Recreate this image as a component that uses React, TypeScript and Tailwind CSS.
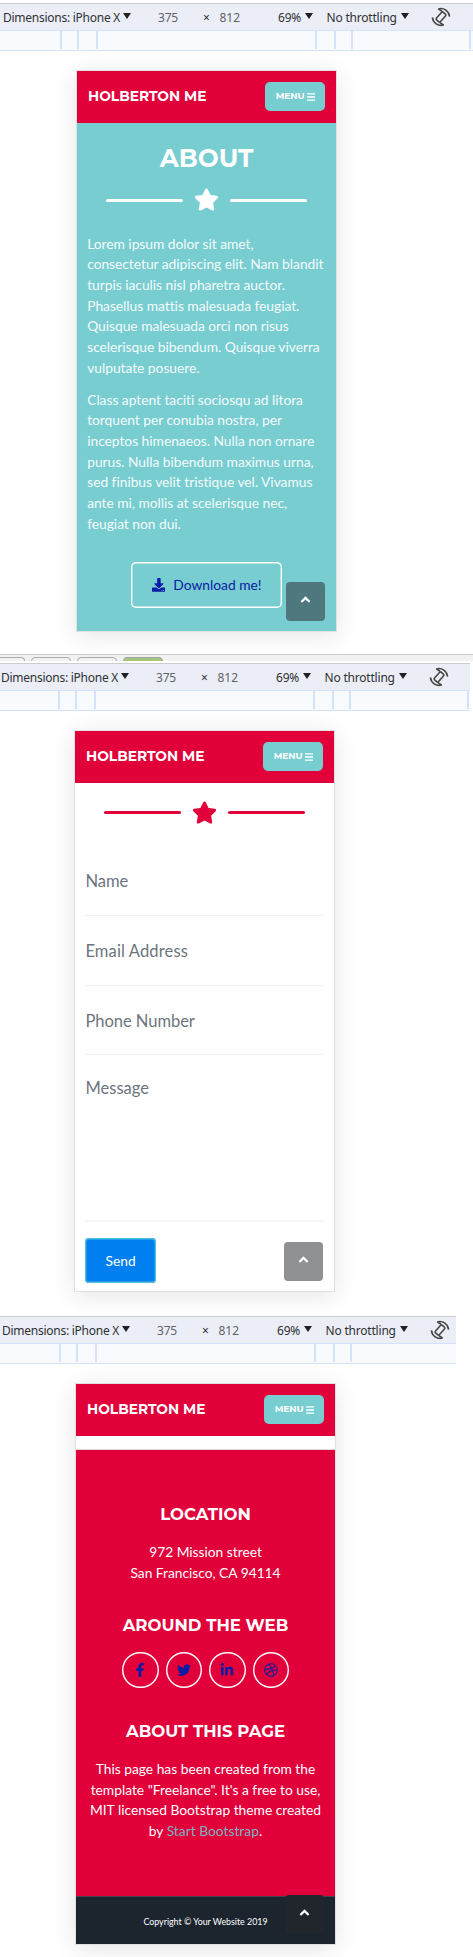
import type { ReactNode } from 'react';
import {
  FaAngleUp,
  FaBars,
  FaDownload,
  FaDribbble,
  FaFacebookF,
  FaLinkedinIn,
  FaStar,
  FaTwitter,
} from 'react-icons/fa';

const heading = "font-['Montserrat','Inter',sans-serif] font-bold whitespace-nowrap";

function Caret() {
  return (
    <svg className="mb-[3px] h-[6px] w-[8px] shrink-0 fill-[#202124]" viewBox="0 0 8 6">
      <path d="M0 0h8L4 6z" />
    </svg>
  );
}

function RotateIcon() {
  return (
    <svg
      className="mb-[2px] h-[20px] w-[20px] fill-none stroke-[#474747]"
      viewBox="0 0 20 20"
      strokeWidth="1.6"
    >
      <rect x="7.3" y="4.9" width="5.4" height="10.2" rx="1.4" transform="rotate(42 10 10)" />
      <path d="M7.4 1.9C13 .4 18 4.2 18.6 9.6M7.2 1.8l3.8 2.4" />
      <path d="M12.6 18.1C7 19.6 2 15.8 1.4 10.4M12.8 18.2L9 15.8" />
    </svg>
  );
}

function Toolbar({ textPad, tickPad, width, lastTick }: { textPad: string; tickPad: string; width: string; lastTick: boolean }) {
  return (
    <div className={`${width} shrink-0 overflow-hidden font-['Noto_Sans',sans-serif] text-[12px] text-[#303134]`}>
      <div className={`flex h-[28px] items-center border-y border-t-[#cbcdd0] border-b-[#d3e2fd] bg-[#ebeef6] pt-[2px] whitespace-nowrap ${textPad}`}>
        <div className="flex w-[155px] shrink-0 items-center">
          <span className="w-[119.5px] tracking-[-0.26px]">Dimensions: iPhone X</span>
          <Caret />
        </div>
        <span className="w-[45px] shrink-0 tracking-[-0.2px] text-[#5f6368]">375</span>
        <span className="w-[16.5px] shrink-0">×</span>
        <span className="w-[58.5px] shrink-0 text-[#5f6368]">812</span>
        <div className="flex w-[48.5px] shrink-0 items-center">
          <span className="w-[26.5px] tracking-[-0.2px]">69%</span>
          <Caret />
        </div>
        <div className="flex w-[104.5px] shrink-0 items-center">
          <span className="w-[74px] tracking-[-0.2px]">No throttling</span>
          <Caret />
        </div>
        <RotateIcon />
      </div>
      <div className={`flex h-[20px] border-b border-[#d3e2fd] bg-[#f8fafe] pb-[1px] ${tickPad}`}>
        <div className="w-[17px] shrink-0 border-l-2 border-[#d3e2fd]" />
        <div className="w-[19px] shrink-0 border-l-2 border-[#d3e2fd]" />
        <div className="w-[219px] shrink-0 border-l-2 border-[#d3e2fd]" />
        <div className="w-[19px] shrink-0 border-l-2 border-[#d3e2fd]" />
        <div className="w-[17px] shrink-0 border-l-2 border-[#d3e2fd]" />
        <div className="w-[118px] shrink-0 border-l-2 border-[#d3e2fd]" />
        {lastTick && <div className="w-[2px] shrink-0 bg-[#d3e2fd]" />}
      </div>
    </div>
  );
}

function Phone({ place, children, top }: { place: string; children: ReactNode; top: string }) {
  return (
    <div className={`relative mt-[19px] flex h-[562px] w-[261px] shrink-0 flex-col border border-[#e0e0e0] bg-white shadow-[0_4px_24px_rgba(0,0,0,0.10)] ${place}`}>
      <div className="flex h-[52px] shrink-0 items-center justify-between bg-[#e1003a] px-[11px] text-white">
        <span className={`${heading} mb-[2px] text-[13.8px]`}>HOLBERTON ME</span>
        <button className="mb-[1px] flex h-[29px] w-[60px] items-center justify-center gap-[2px] rounded-[5px] bg-[#78cdd1] pl-[1px]">
          <span className={`${heading} text-[8.97px]`}>MENU</span>
          <FaBars className="w-[8.8px] text-[10px]" />
        </button>
      </div>
      {children}
      <button className={`absolute right-[11px] bottom-[10.5px] flex h-[38.5px] w-[39px] justify-center rounded-[4px] pt-[10px] text-white ${top}`}>
        <FaAngleUp className="text-[15px]" />
      </button>
    </div>
  );
}

function Divider({ color, bar }: { color: string; bar: string }) {
  return (
    <div className={`flex h-[24px] items-center justify-center gap-[11px] ${color}`}>
      <div className={`h-[3px] w-[77px] rounded-full ${bar}`} />
      <FaStar className="mb-[1px] h-[25px] w-[25px] shrink-0" />
      <div className={`h-[3px] w-[77px] rounded-full ${bar}`} />
    </div>
  );
}

function Social({ children }: { children: ReactNode }) {
  return (
    <a className="flex h-[36.5px] w-[36.5px] items-center justify-center rounded-full text-[14px] text-[#0a1ca5] shadow-[inset_0_0_0_1.4px_#ffffff]">
      {children}
    </a>
  );
}

const lines1 = [
  'Lorem ipsum dolor sit amet,',
  'consectetur adipiscing elit. Nam blandit',
  'turpis iaculis nisl pharetra auctor.',
  'Phasellus mattis malesuada feugiat.',
  'Quisque malesuada orci non risus',
  'scelerisque bibendum. Quisque viverra',
  'vulputate posuere.',
];
const lines2 = [
  'Class aptent taciti sociosqu ad litora',
  'torquent per conubia nostra, per',
  'inceptos himenaeos. Nulla non ornare',
  'purus. Nulla bibendum maximus urna,',
  'sed finibus velit tristique vel. Vivamus',
  'ante mi, mollis at scelerisque nec,',
  'feugiat non dui.',
];

function Lines({ items }: { items: string[] }) {
  return (
    <p>
      {items.map((l) => (
        <span key={l} className="block whitespace-nowrap">{l}</span>
      ))}
    </p>
  );
}

export default function App() {
  return (
    <div className="flex h-[1957px] w-[473px] flex-col overflow-hidden bg-white pt-[3px] font-['Lato',sans-serif] text-[13.8px] leading-[20.7px]">
      <section className="flex h-[651px] shrink-0 flex-col">
        <Toolbar width="w-[473px]" textPad="pl-[3px]" tickPad="pl-[60px]" lastTick />
        <Phone place="ml-[76px]" top="bg-[#4f787e]">
          <div className="flex grow flex-col bg-[#78cdd1] text-white">
            <h2 className={`${heading} mt-[21px] text-center text-[24.84px] leading-[28px]`}>ABOUT</h2>
            <div className="mt-[16px] mb-[21.6px]">
              <Divider color="text-white" bar="bg-white" />
            </div>
            <div className="flex flex-col gap-[11px] pl-[10.2px] tracking-[-0.025px] text-[#f4fbfc]">
              <Lines items={lines1} />
              <Lines items={lines2} />
            </div>
            <button className="mt-[27.2px] ml-[54px] flex h-[46px] w-[151px] items-center justify-center gap-[8px] rounded-[5px] pt-[1px] text-[#0a1ca5] shadow-[inset_0_0_0_1.4px_#ffffff]">
              <FaDownload />
              <span>Download me!</span>
            </button>
          </div>
        </Phone>
      </section>

      <div className="flex h-[7px] shrink-0 gap-[6px] overflow-hidden border-t border-[#cbcbcb] bg-[#f1f1f1] pt-[2px]">
        <div className="h-[8px] w-[25px] rounded-tr-[4px] border-t border-r border-[#aaa]" />
        <div className="h-[8px] w-[40px] rounded-t-[4px] border border-[#aaa]" />
        <div className="h-[8px] w-[40px] rounded-t-[4px] border border-[#aaa]" />
        <div className="h-[8px] w-[40px] rounded-t-[4px] border border-[#a3a3a3] bg-[#a5c77c]" />
      </div>

      <section className="flex h-[655px] shrink-0 flex-col pt-[2px]">
        <Toolbar width="w-[470px]" textPad="pl-[1px]" tickPad="pl-[58px]" lastTick />
        <Phone place="ml-[74px]" top="bg-[#8f9092]">
          <div className="flex grow flex-col px-[10.4px] text-[16.56px] text-[#6c757d]">
            <div className="mt-[17.5px]">
              <Divider color="text-[#e1003a]" bar="bg-[#e1003a]" />
            </div>
            <div className="mt-[22.5px] flex h-[69px] items-center border-b border-[#f1f1f1] pt-[1px]">Name</div>
            <div className="flex h-[69.5px] items-center border-b border-[#f1f1f1] pt-[3px] tracking-[0.12px]">Email Address</div>
            <div className="flex h-[69.5px] items-center border-b border-[#f1f1f1] pt-[3px] tracking-[-0.05px]">Phone Number</div>
            <div className="h-[167px] border-b-2 border-[#f6f6f6] pt-[23px]">Message</div>
            <button className="mt-[16px] h-[45px] w-[70.5px] rounded-[4px] bg-[#0080f0] pt-[1px] text-[13.8px] text-white shadow-[inset_0_0_0_1.4px_#4fbddb]">
              Send
            </button>
          </div>
        </Phone>
      </section>

      <section className="flex h-[641px] shrink-0 flex-col">
        <Toolbar width="w-[456px]" textPad="pl-[2px]" tickPad="pl-[59px]" lastTick={false} />
        <Phone place="ml-[75px]" top="bg-[#20262c]">
          <div className="mt-[13px] flex grow flex-col items-center border-t border-[#d9d9d9] bg-[#e1003a] text-center text-white">
            <h4 className={`${heading} mt-[54px] text-[16.56px] leading-[20px]`}>LOCATION</h4>
            <p className="mt-[17.9px] tracking-[-0.02px]">
              972 Mission street
              <br />
              San Francisco, CA 94114
            </p>
            <h4 className={`${heading} mt-[31.5px] text-[16.56px] leading-[20px]`}>AROUND THE WEB</h4>
            <div className="mt-[17px] flex gap-[7px]">
              <Social><FaFacebookF /></Social>
              <Social><FaTwitter /></Social>
              <Social><FaLinkedinIn /></Social>
              <Social><FaDribbble /></Social>
            </div>
            <h4 className={`${heading} mt-[33px] text-[16.56px] leading-[20px]`}>ABOUT THIS PAGE</h4>
            <p className="mt-[17.6px] whitespace-nowrap">
              This page has been created from the
              <br />
              template "Freelance". It's a free to use,
              <br />
              MIT licensed Bootstrap theme created
              <br />
              by <a className="text-[#78b5c3]">Start Bootstrap</a>.
            </p>
          </div>
          <div className="h-[48px] shrink-0 border-t border-[#47434e] bg-[#1c252e] pt-[15px] text-center text-[8.83px] leading-[20px] text-white">
            Copyright © Your Website 2019
          </div>
        </Phone>
      </section>
    </div>
  );
}
